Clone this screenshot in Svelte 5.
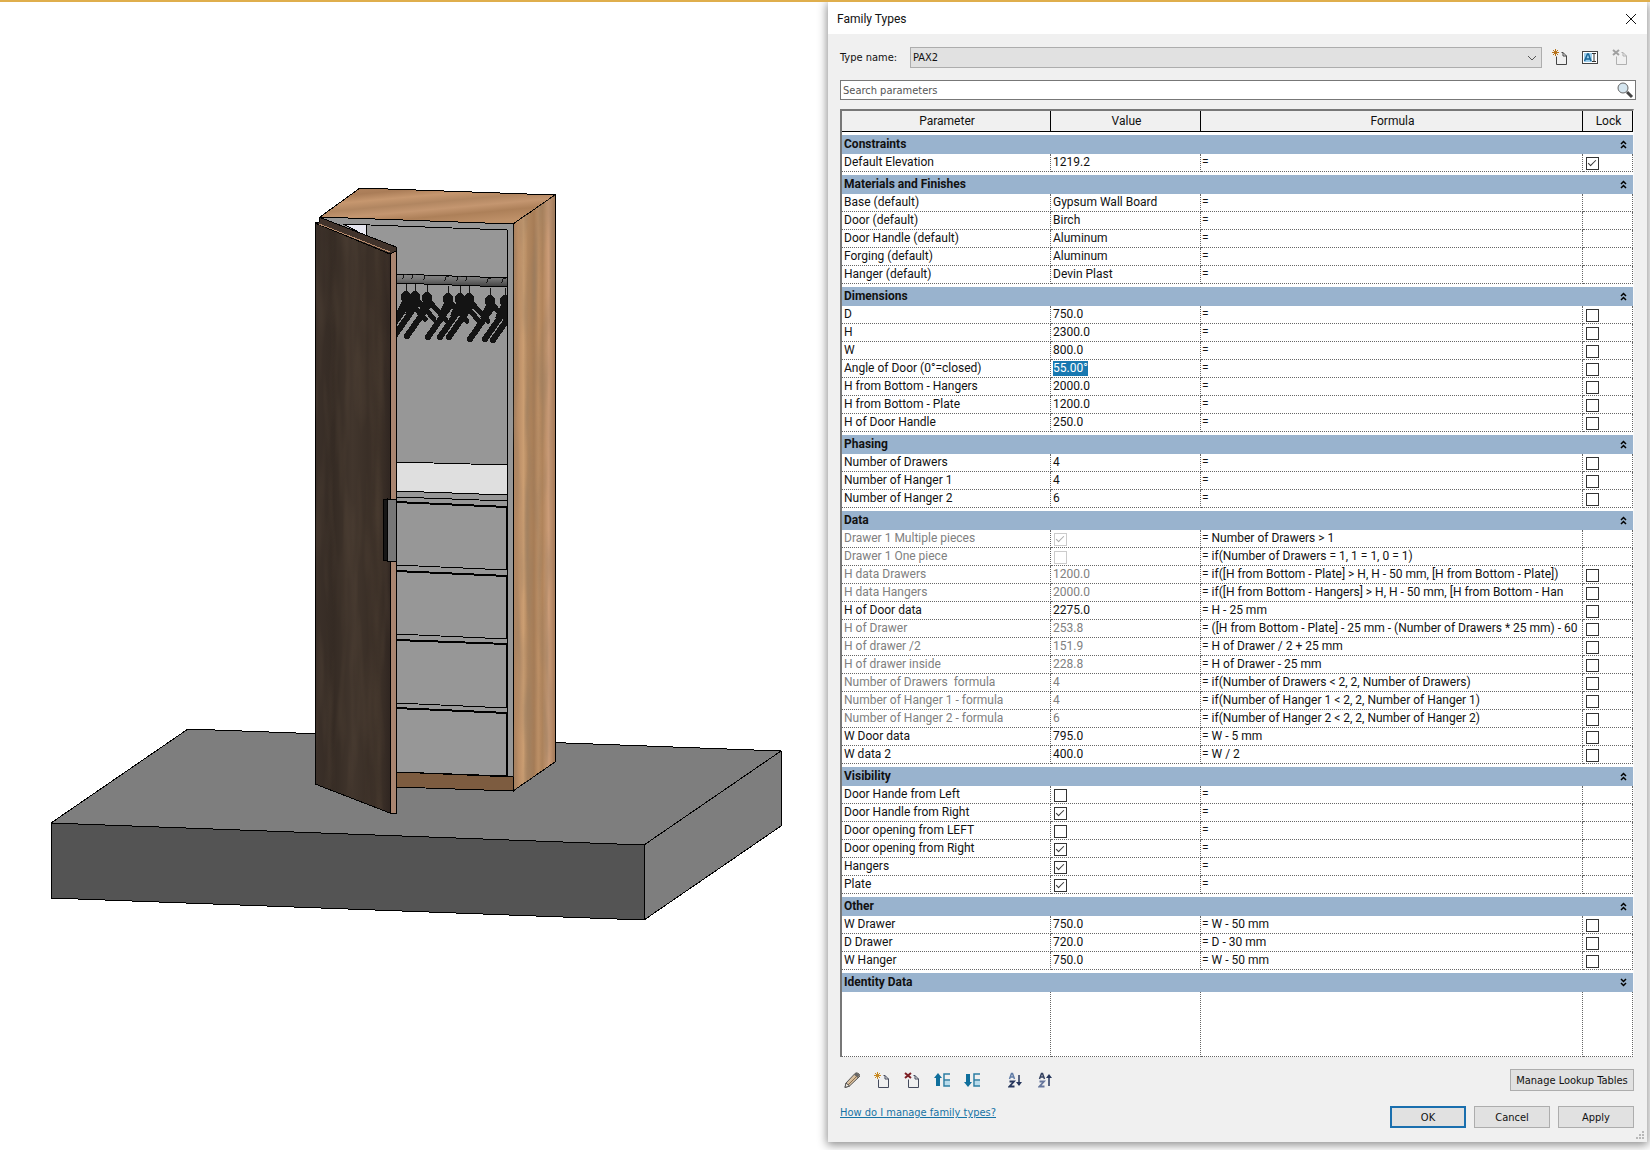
<script lang="ts">
	type Row = { name: string; value?: string | boolean; formula?: string; lock?: boolean; dim?: boolean; active?: boolean };
	type Group = { title: string; open: boolean; rows: Row[] };

	let groups: Group[] = $state([
		{
			title: 'Constraints',
			open: true,
			rows: [{ name: 'Default Elevation', value: '1219.2', lock: true }]
		},
		{
			title: 'Materials and Finishes',
			open: true,
			rows: [
				{ name: 'Base (default)', value: 'Gypsum Wall Board' },
				{ name: 'Door (default)', value: 'Birch' },
				{ name: 'Door Handle (default)', value: 'Aluminum' },
				{ name: 'Forging (default)', value: 'Aluminum' },
				{ name: 'Hanger (default)', value: 'Devin Plast' }
			]
		},
		{
			title: 'Dimensions',
			open: true,
			rows: [
				{ name: 'D', value: '750.0', lock: false },
				{ name: 'H', value: '2300.0', lock: false },
				{ name: 'W', value: '800.0', lock: false },
				{ name: 'Angle of Door (0°=closed)', value: '55.00°', lock: false, active: true },
				{ name: 'H from Bottom - Hangers', value: '2000.0', lock: false },
				{ name: 'H from Bottom - Plate', value: '1200.0', lock: false },
				{ name: 'H of Door Handle', value: '250.0', lock: false }
			]
		},
		{
			title: 'Phasing',
			open: true,
			rows: [
				{ name: 'Number of Drawers', value: '4', lock: false },
				{ name: 'Number of Hanger 1', value: '4', lock: false },
				{ name: 'Number of Hanger 2', value: '6', lock: false }
			]
		},
		{
			title: 'Data',
			open: true,
			rows: [
				{ name: 'Drawer 1 Multiple pieces', value: true, formula: 'Number of Drawers > 1', dim: true },
				{ name: 'Drawer 1 One piece', value: false, formula: 'if(Number of Drawers = 1, 1 = 1, 0 = 1)', dim: true },
				{ name: 'H data Drawers', value: '1200.0', formula: 'if([H from Bottom - Plate] > H, H - 50 mm, [H from Bottom - Plate])', lock: false, dim: true },
				{ name: 'H data Hangers', value: '2000.0', formula: 'if([H from Bottom - Hangers] > H, H - 50 mm, [H from Bottom - Han', lock: false, dim: true },
				{ name: 'H of Door data', value: '2275.0', formula: 'H - 25 mm', lock: false },
				{ name: 'H of Drawer', value: '253.8', formula: '([H from Bottom - Plate] - 25 mm - (Number of Drawers * 25 mm) - 60', lock: false, dim: true },
				{ name: 'H of drawer /2', value: '151.9', formula: 'H of Drawer / 2 + 25 mm', lock: false, dim: true },
				{ name: 'H of drawer inside', value: '228.8', formula: 'H of Drawer - 25 mm', lock: false, dim: true },
				{ name: 'Number of Drawers  formula', value: '4', formula: 'if(Number of Drawers < 2, 2, Number of Drawers)', lock: false, dim: true },
				{ name: 'Number of Hanger 1 - formula', value: '4', formula: 'if(Number of Hanger 1 < 2, 2, Number of Hanger 1)', lock: false, dim: true },
				{ name: 'Number of Hanger 2 - formula', value: '6', formula: 'if(Number of Hanger 2 < 2, 2, Number of Hanger 2)', lock: false, dim: true },
				{ name: 'W Door data', value: '795.0', formula: 'W - 5 mm', lock: false },
				{ name: 'W data 2', value: '400.0', formula: 'W / 2', lock: false }
			]
		},
		{
			title: 'Visibility',
			open: true,
			rows: [
				{ name: 'Door Hande from Left', value: false },
				{ name: 'Door Handle from Right', value: true },
				{ name: 'Door opening from LEFT', value: false },
				{ name: 'Door opening from Right', value: true },
				{ name: 'Hangers', value: true },
				{ name: 'Plate', value: true }
			]
		},
		{
			title: 'Other',
			open: true,
			rows: [
				{ name: 'W Drawer', value: '750.0', formula: 'W - 50 mm', lock: false },
				{ name: 'D Drawer', value: '720.0', formula: 'D - 30 mm', lock: false },
				{ name: 'W Hanger', value: '750.0', formula: 'W - 50 mm', lock: false }
			]
		},
		{ title: 'Identity Data', open: false, rows: [] }
	]);

	let search = $state('');

	// front edges of the drawers: top left, top right, bottom left, bottom right
	const drawers = [
		[502, 507, 565, 570],
		[571, 576, 634, 639],
		[640, 644, 703, 708],
		[708, 713, 772, 776]
	];

	const hangers = [
		[406, 285],
		[415, 285],
		[427, 286],
		[448, 287],
		[460, 287],
		[469, 287],
		[490, 289],
		[505, 289],
		[513, 290]
	];
</script>

{#snippet page(star: string, line: string)}
	<path d="M4.500 7.500V15.500H14.500V7L11 3.500H9.500M11 3.500V7H14.500" fill="none" stroke={line} />
	<path d="M3.500 0V7M0 3.500H7M1 1L6 6M6 1L1 6" stroke={star} fill="none" />
	<circle cx="3.500" cy="3.500" r="1.500" fill={star} />
{/snippet}

<div class="screen">
	<div class="view">
		<svg viewBox="0 0 828 1147" role="img" aria-label="Wardrobe" shape-rendering="crispEdges">
			<defs>
				<linearGradient id="side" x1="0" x2="1">
					<stop offset="0" stop-color="#a87f5c" />
					<stop offset="0.150" stop-color="#bd9068" />
					<stop offset="0.250" stop-color="#cb9e72" />
					<stop offset="0.350" stop-color="#b1875f" />
					<stop offset="0.500" stop-color="#a67c56" />
					<stop offset="0.600" stop-color="#bb8f66" />
					<stop offset="0.700" stop-color="#b0845b" />
					<stop offset="0.850" stop-color="#cc9d79" />
					<stop offset="1" stop-color="#a67a58" />
				</linearGradient>
				<linearGradient id="top" x1="0" y1="0" x2="0.600" y2="1">
					<stop offset="0" stop-color="#b4845f" />
					<stop offset="0.200" stop-color="#aa7d58" />
					<stop offset="0.350" stop-color="#c6976f" />
					<stop offset="0.500" stop-color="#b18661" />
					<stop offset="0.650" stop-color="#c49670" />
					<stop offset="0.800" stop-color="#ad8059" />
					<stop offset="1" stop-color="#be9068" />
				</linearGradient>
				<linearGradient id="door" x1="0" x2="1">
					<stop offset="0" stop-color="#3b3029" />
					<stop offset="0.250" stop-color="#352b24" />
					<stop offset="0.500" stop-color="#42362d" />
					<stop offset="0.700" stop-color="#3a2f27" />
					<stop offset="0.850" stop-color="#3e3229" />
					<stop offset="1" stop-color="#302621" />
				</linearGradient>
				<linearGradient id="rod" x1="0" y1="0" x2="0" y2="1">
					<stop offset="0" stop-color="#8a8a8a" />
					<stop offset="0.400" stop-color="#747474" />
					<stop offset="1" stop-color="#3d3d3d" />
				</linearGradient>
				<filter id="grain" x="0" y="0" width="100%" height="100%">
					<feTurbulence type="fractalNoise" baseFrequency="0.120 0.012" numOctaves="2" seed="4" />
					<feColorMatrix values="0 0 0 0 0.300  0 0 0 0 0.200  0 0 0 0 0.120  2.500 0 0 0 -1" />
					<feComposite in2="SourceGraphic" operator="in" />
				</filter>
				<clipPath id="inside"><path d="M397 225L507 230V776H397Z" /></clipPath>
			</defs>

			<!-- floor slab -->
			<g stroke="#000" stroke-linejoin="round">
				<path d="M188 729L781 751L644 845L51 823Z" fill="#7e7e7e" />
				<path d="M51 823L644 845V920L51 898Z" fill="#545454" />
				<path d="M644 845L781 751V826L644 920Z" fill="#7e7e7e" />
			</g>

			<!-- carcass -->
			<g stroke="#000">
				<path d="M320 217L513 224V791L320 784Z" fill="#979797" />
				<path d="M360 188L555 195L513 224L320 217Z" fill="url(#top)" />
				<path d="M513 224L555 195V762L513 791Z" fill="url(#side)" />
				<path d="M513 224L555 195V762L513 791Z" filter="url(#grain)" opacity="0.500" stroke="none" />
				<path d="M343 224L507 230V776" fill="none" />
				<path d="M343 224H366V236Z" fill="#e6e6f0" />
				<path d="M396 462L507 465V495L396 491Z" fill="#dfdfdf" />
				<path d="M396 497L507 501" />
				<path d="M396 772L513 777V791L396 787Z" fill="#7d5c40" />
			</g>

			{#each drawers as [tl, tr, bl, br]}
				<path d="M396 {bl}L507 {br}" stroke="#000" />
				<path d="M396 {tl}L507 {tr}V{br}" stroke="#000" stroke-width="2" fill="none" />
			{/each}

			<!-- rail with hangers -->
			<g clip-path="url(#inside)">
				<path d="M396 274L508 278V287L396 283Z" fill="url(#rod)" stroke="#000" />
				{#each hangers as [x, y]}
					<g transform="translate({x} {y})" stroke="#141414" fill="none">
						<path d="M0 9V-1M-4 -6Q-2 -7 -2 -10L1 -11" />
						<ellipse cx="0" cy="12" rx="5" ry="6" fill="#141414" stroke="none" />
						<path d="M2 15L19 34M-1 16L-7 28" stroke-width="5" stroke-linecap="round" />
						<path d="M1 20L-20 50" stroke-width="6" stroke-linecap="round" />
					</g>
				{/each}
			</g>

			<!-- door leaf and handle -->
			<g stroke="#000">
				<path d="M315 223L390 254V813L315 784Z" fill="url(#door)" />
				<path d="M315 223L390 254V813L315 784Z" filter="url(#grain)" opacity="0.100" stroke="none" />
				<path d="M390 254L396 251V813H390Z" fill="#a98570" />
				<path d="M319 217L396 247V251L390 254L315 223L319 222Z" fill="#41332b" />
				<path d="M319 224L390 252" stroke="#b58a6b" />
				<path d="M383 500L387 499V561L383 560Z" fill="#161616" />
				<path d="M387 499H396V561H387Z" fill="#777" />
			</g>
		</svg>
	</div>

	<section class="dialog">
		<header>
			<h1>Family Types</h1>
			<button class="icon" aria-label="Close">
				<svg width="12" height="12" viewBox="0 0 12 12"><path d="M1 1L11 11M11 1L1 11" stroke="#111" fill="none" /></svg>
			</button>
		</header>

		<div class="content">
			<div class="type">
				<label for="typeName">Type name:</label>
				<div class="select">
					<select id="typeName"><option>PAX2</option></select>
					<svg width="10" height="6" viewBox="0 0 10 6"><path d="M1 1L5 5L9 1" stroke="#555" fill="none" /></svg>
				</div>
				<div class="typeButtons">
					<button class="icon" aria-label="New type">
						<svg width="16" height="17" viewBox="0 0 16 17">{@render page('#b8741c', '#444')}</svg>
					</button>
					<button class="icon" aria-label="Rename type">
						<svg width="16" height="17" viewBox="0 0 16 17">
							<rect x="0.500" y="2.500" width="15" height="12" fill="#fff" stroke="#444" />
							<rect x="2" y="4" width="8" height="9" fill="#9fd0ee" />
							<path d="M2.500 12L5.500 5H6.500L9 12M4 10H8" stroke="#1a6696" stroke-width="1.500" fill="none" />
							<path d="M10 4.500H14M12 4.500V12.500M10 12.500H14" stroke="#333" fill="none" />
						</svg>
					</button>
					<button class="icon" aria-label="Delete type" disabled>
						<svg width="16" height="17" viewBox="0 0 16 17">
							<path d="M4.500 7.500V15.500H14.500V7L11 3.500H9.500M11 3.500V7H14.500" fill="none" stroke="#b0b0b0" />
							<path d="M1 1L7 6M7 1L1 6" stroke="#a0a0a0" stroke-width="2" />
						</svg>
					</button>
				</div>
			</div>

			<div class="search">
				<input type="text" aria-label="Search parameters" placeholder="Search parameters" bind:value={search} />
				<svg width="17" height="17" viewBox="0 0 17 17">
					<path d="M10 10L15 15" stroke="#444" stroke-width="3" />
					<circle cx="6" cy="6" r="5" fill="#d5e6f0" stroke="#666" />
				</svg>
			</div>

			<div class="grid">
				<table>
					<thead>
						<tr>
							<th class="name">Parameter</th>
							<th class="value">Value</th>
							<th>Formula</th>
							<th class="lock">Lock</th>
						</tr>
					</thead>
					{#each groups as group}
						<tbody>
							<tr class="group">
								<th colspan="4">
									<div>
										{group.title}
										<button class="icon" aria-label="Toggle {group.title}" onclick={() => (group.open = !group.open)}>
											<svg width="7" height="9" viewBox="0 0 7 9">
												{#if group.open}
													<path d="M1 4L3.500 1.500L6 4M1 8L3.500 5.500L6 8" stroke="#000" stroke-width="1.500" fill="none" />
												{:else}
													<path d="M1 1L3.500 3.500L6 1M1 5L3.500 7.500L6 5" stroke="#000" stroke-width="1.500" fill="none" />
												{/if}
											</svg>
										</button>
									</div>
								</th>
							</tr>
							{#if group.open}
								{#each group.rows as row}
									<tr class:dim={row.dim}>
										<td>{row.name}</td>
										<td>
											{#if typeof row.value === 'boolean'}
												<input type="checkbox" aria-label={row.name} bind:checked={row.value} disabled={row.dim} />
											{:else if row.active}
												<input class="active" type="text" aria-label={row.name} bind:value={row.value} />
											{:else}
												{row.value}
											{/if}
										</td>
										<td class="formula">= {row.formula ?? ''}</td>
										<td>
											{#if row.lock !== undefined}
												<input type="checkbox" aria-label="Lock {row.name}" bind:checked={row.lock} />
											{/if}
										</td>
									</tr>
								{/each}
							{/if}
						</tbody>
					{/each}
					<tbody>
						<tr class="rest"><td></td><td></td><td></td><td></td></tr>
					</tbody>
				</table>
			</div>

			<div class="tools">
				<button class="icon" aria-label="Edit parameter">
					<svg width="16" height="17" viewBox="0 0 16 17">
						<path d="M1 15.500L2 11L11 1.500Q13 0 15 2T15 5L5.500 14Z" fill="#d8c0a0" stroke="#555" />
						<path d="M10 2.500L12 0.500L15.500 3L13.500 6Z" fill="#666" />
						<path d="M4 13L13 4" stroke="#8a6d4b" />
						<path d="M2 11L1 15.500L5.500 14Z" fill="#f4efe6" stroke="#555" />
					</svg>
				</button>
				<button class="icon" aria-label="New parameter">
					<svg width="16" height="17" viewBox="0 0 16 17">{@render page('#c98a22', '#444a5c')}</svg>
				</button>
				<button class="icon" aria-label="Delete parameter">
					<svg width="16" height="17" viewBox="0 0 16 17">
						<path d="M4.500 7.500V15.500H14.500V7L11 3.500H9.500M11 3.500V7H14.500" fill="none" stroke="#444a5c" />
						<path d="M1 1L7 6M7 1L1 6" stroke="#7d1f24" stroke-width="2" />
					</svg>
				</button>
				<button class="icon" aria-label="Move up">
					<svg width="16" height="17" viewBox="0 0 16 17">
						<path d="M4 1L8 6H6V14H2V6H0Z" fill="#0f6f9c" />
						<path d="M11 9H16V14H11Z" fill="#b9dcec" />
						<path d="M16 2H10V14H16M10 8H16" stroke="#2c7da3" stroke-width="1.500" fill="none" />
					</svg>
				</button>
				<button class="icon" aria-label="Move down">
					<svg width="16" height="17" viewBox="0 0 16 17">
						<path d="M4 15L8 10H6V2H2V10H0Z" fill="#0f6f9c" />
						<path d="M11 9H16V14H11Z" fill="#b9dcec" />
						<path d="M16 2H10V14H16M10 8H16" stroke="#2c7da3" stroke-width="1.500" fill="none" />
					</svg>
				</button>
				<button class="icon sort" aria-label="Sort ascending">
					<svg width="16" height="17" viewBox="0 0 16 17">
						<path d="M1.500 7L3.500 1.500H4.500L6.500 7M2.500 5H5.500" stroke="#5f7ba6" stroke-width="1.500" fill="none" />
						<path d="M1.500 9.500H6L1.500 14.500H6.500" stroke="#26365c" stroke-width="1.800" fill="none" />
						<path d="M11 3V13" stroke="#26365c" stroke-width="1.500" />
						<path d="M8 10H14L11 14Z" fill="#26365c" />
					</svg>
				</button>
				<button class="icon" aria-label="Sort descending">
					<svg width="16" height="17" viewBox="0 0 16 17">
						<path d="M1.500 7L3.500 1.500H4.500L6.500 7M2.500 5H5.500" stroke="#33405f" stroke-width="1.500" fill="none" />
						<path d="M1.500 9.500H6L1.500 14.500H6.500" stroke="#66769c" stroke-width="1.800" fill="none" />
						<path d="M11 4V14" stroke="#26365c" stroke-width="1.500" />
						<path d="M8 6H14L11 2Z" fill="#26365c" />
					</svg>
				</button>
				<button class="push wide">Manage Lookup Tables</button>
			</div>

			<footer>
				<a href="#help">How do I manage family types?</a>
				<div class="buttons">
					<button class="push ok">OK</button>
					<button class="push">Cancel</button>
					<button class="push">Apply</button>
				</div>
			</footer>
		</div>
		<svg class="grip" width="8" height="8" viewBox="0 0 8 8">
			<path d="M6 0H8V2H6ZM3 3H5V5H3ZM6 3H8V5H6ZM0 6H2V8H0ZM3 6H5V8H3ZM6 6H8V8H6Z" fill="#b8b8b8" />
		</svg>
	</section>
</div>

<style>
	:global(body) {
		background: #fff;
	}

	.screen {
		display: grid;
		grid-template-columns: 828fr 819fr;
		min-height: 100vh;
		box-sizing: border-box;
		padding-right: 3px;
		border-top: 2px solid #dfae4c;
		font-family: Roboto, 'Segoe UI', sans-serif;
		font-size: 12px;
		color: #111;
		overflow: hidden;
	}

	.view svg {
		display: block;
		width: 100%;
		margin-top: -2px;
	}

	.dialog {
		position: relative;
		align-self: start;
		background: #f0f0f0;
		box-shadow: 0 2px 9px 1px rgba(0, 0, 0, 0.45);
	}

	header {
		display: flex;
		align-items: center;
		justify-content: space-between;
		box-sizing: border-box;
		height: 32px;
		padding: 2px 10px 0 9px;
		background: #fff;
	}

	h1 {
		margin: 0;
		font-size: 12px;
		font-weight: normal;
	}

	button,
	input,
	select {
		font: inherit;
		color: inherit;
	}

	.icon {
		display: flex;
		padding: 0;
		border: none;
		background: none;
	}

	.content {
		padding: 13px 11px 14px 12px;
	}

	.type,
	.search,
	.push,
	footer {
		font-family: 'DejaVu Sans Condensed', Tahoma, sans-serif;
		font-size: 11px;
	}

	.type {
		display: flex;
		align-items: center;
	}

	.type label {
		width: 70px;
	}

	.select {
		display: flex;
		flex: 1;
		align-items: center;
		height: 19px;
		padding-right: 4px;
		border: 1px solid #adadad;
		background: #e1e1e1;
	}

	select {
		flex: 1;
		appearance: none;
		border: none;
		padding: 0 2px;
		background: none;
	}

	.typeButtons {
		display: flex;
		gap: 14px;
		padding: 0 8px 0 10px;
	}

	.search {
		display: flex;
		align-items: center;
		height: 18px;
		margin-top: 12px;
		padding: 0 1px 0 2px;
		border: 1px solid #777;
		background: #fff;
	}

	.search input {
		flex: 1;
		border: none;
		padding: 0;
		outline: none;
	}

	.search input::placeholder {
		color: #555;
		opacity: 1;
	}

	.grid {
		margin: 9px 2px 0 0;
		border-top: 2px solid #777;
		border-left: 2px solid #777;
		border-right: 1px solid #f8f8f8;
		background: #fff;
	}

	table {
		width: 100%;
		table-layout: fixed;
		border-collapse: separate;
		border-spacing: 0;
	}

	th,
	td {
		box-sizing: border-box;
		padding: 0 0 0 2px;
		text-align: left;
		white-space: pre;
		overflow: hidden;
	}

	thead th {
		height: 21px;
		border-right: 1px solid #000;
		border-bottom: 1px solid #000;
		background: #f0f0f0;
		font-weight: normal;
		text-align: center;
	}

	.name {
		width: 209px;
	}

	.value {
		width: 150px;
	}

	.lock {
		width: 50px;
	}

	.group th {
		height: 22px;
		border-top: 3px solid #fff;
		background: #99b3ce;
		line-height: 19px;
	}

	.group div {
		display: flex;
		align-items: center;
		justify-content: space-between;
		padding-right: 6px;
	}

	td {
		height: 18px;
		border-right: 1px dotted #666;
		border-bottom: 1px dotted #666;
		line-height: 17px;
	}

	td.formula {
		padding-left: 1px;
	}

	.dim td {
		color: #808080;
	}

	.dim td.formula {
		color: #111;
	}

	.rest td {
		height: 65px;
	}

	input[type='checkbox'] {
		appearance: none;
		display: block;
		width: 13px;
		height: 13px;
		margin: 2px 0 0 1px;
		border: 1px solid #333;
		background: #fff;
	}

	input[type='checkbox']:checked::after {
		content: '';
		display: block;
		width: 7px;
		height: 3px;
		margin: 2px 0 0 1px;
		border-left: 1px solid #333;
		border-bottom: 1px solid #333;
		transform: rotate(-45deg);
	}

	input[type='checkbox']:disabled {
		border-color: #ccc;
	}

	input[type='checkbox']:disabled::after {
		border-color: #aaa;
	}

	.active {
		display: block;
		field-sizing: content;
		height: 15px;
		padding: 0;
		border: none;
		background: #1878b0;
		color: #fff;
	}

	.tools {
		display: flex;
		align-items: center;
		gap: 14px;
		margin-top: 12px;
		padding: 0 2px 0 4px;
	}

	.sort {
		margin-left: 14px;
	}

	.push {
		width: 76px;
		height: 22px;
		padding: 0;
		border: 1px solid #adadad;
		background: #e1e1e1;
	}

	.wide {
		width: 124px;
		margin-left: auto;
	}

	.ok {
		border: 2px solid #1a6fae;
	}

	footer {
		display: flex;
		justify-content: space-between;
		margin-top: 15px;
		padding-right: 2px;
	}

	.buttons {
		display: flex;
		gap: 8px;
	}

	footer a {
		color: #1673a5;
	}

	.grip {
		position: absolute;
		right: 3px;
		bottom: 3px;
	}
</style>
